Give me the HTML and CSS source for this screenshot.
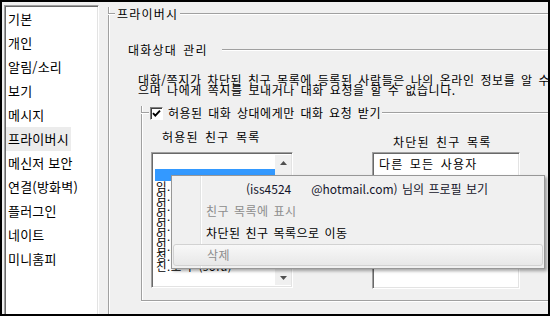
FILE: index.html
```html
<!DOCTYPE html>
<html lang="ko">
<head>
  <meta charset="UTF-8">
  <meta name="viewport" content="width=device-width, initial-scale=1.0">
  <title>환경설정 - 프라이버시</title>
  <link rel="stylesheet" href="styles.css">
</head>
<body>
  <div class="dialog">
    <ul class="nav">
      <li>기본</li>
      <li>개인</li>
      <li>알림/소리</li>
      <li>보기</li>
      <li>메시지</li>
      <li><span class="selected">프라이버시</span></li>
      <li>메신저 보안</li>
      <li>연결(방화벽)</li>
      <li>플러그인</li>
      <li>네이트</li>
      <li>미니홈피</li>
    </ul>

    <div class="page">
      <div class="group outer">
        <div class="group-head"><span class="title">프라이버시</span></div>
        <div class="section-head"><span class="title">대화상대 관리</span></div>
        <p class="desc">대화/쪽지가 차단된 친구 목록에 등록된 사람들은 나의 온라인 정보를 알 수 없<br>으며 나에게 쪽지를 보내거나 대화 요청을 할 수 없습니다.</p>

        <div class="group inner">
          <div class="group-head check-head">
            <span class="check">
              <svg width="11" height="11" viewBox="0 0 11 11"><path d="M2 5.2 L4.3 7.6 L9 2.6" fill="none" stroke="#000" stroke-width="1.9"/></svg>
            </span>
            <span class="title">허용된 대화 상대에게만 대화 요청 받기</span>
          </div>

          <div class="lists">
            <div class="col allowed">
              <div class="col-title">허용된 친구 목록</div>
              <div class="listbox">
                <div class="rows">
                  <div class="row"></div>
                  <div class="row active"></div>
                  <div class="row small">임.지훈 (jihoon)</div>
                  <div class="row small">임.수진 (sujin)</div>
                  <div class="row small">임.민호 (minho)</div>
                  <div class="row small">임.영희 (young)</div>
                  <div class="row small">임.현우 (hyun)</div>
                  <div class="row small">임.서연 (seo)</div>
                  <div class="row small">임.도윤 (doyun)</div>
                  <div class="row small">정.하늘 (sky)</div>
                  <div class="row small">진.소라 (sora)</div>
                </div>
                <div class="scroll">
                  <svg width="7" height="4" viewBox="0 0 7 4"><path d="M0 4 L3.5 0 L7 4Z" fill="#505050"/></svg>
                  <svg width="7" height="4" viewBox="0 0 7 4"><path d="M0 0 L3.5 4 L7 0Z" fill="#505050"/></svg>
                </div>
              </div>
            </div>

            <div class="col blocked">
              <div class="col-title">차단된 친구 목록</div>
              <div class="listbox">
                <div class="rows">
                  <div class="row plain">다른 모든 사용자</div>
                </div>
              </div>
            </div>
          </div>
        </div>
      </div>
    </div>

    <div class="menu">
      <div class="item profile">(iss4524<span class="blank"></span>@hotmail.com) 님의 프로필 보기</div>
      <div class="item disabled">친구 목록에 표시</div>
      <div class="item">차단된 친구 목록으로 이동</div>
      <div class="item disabled hover">삭제</div>
    </div>
  </div>
</body>
</html>
```

FILE: styles.css
```css
html,
body {
  margin: 0;
  padding: 0;
}

body {
  font-family: "Noto Sans CJK KR", "Noto Sans", sans-serif;
  color: #000;
}

.dialog {
  width: 550px;
  height: 316px;
  box-sizing: border-box;
  border: 2px solid #000;
  background-color: #f0f0f0;
  display: flex;
  align-items: flex-start;
  overflow: hidden;
  position: relative;
}

/* left category list */
.nav {
  list-style: none;
  margin: 3px 0 0 2px;
  padding: 1px 0 0 0;
  width: 95px;
  height: 330px;
  flex-shrink: 0;
  box-sizing: border-box;
  background-color: #fff;
  border: 1px solid;
  border-color: #a0a0a0 #fff #fff #a0a0a0;
  box-shadow: inset 1px 1px 0 #696969, inset -1px -1px 0 #e3e3e3;
  font-size: 13px;
  letter-spacing: 0.2px;
}

.nav li {
  height: 24px;
  line-height: 24px;
  padding-left: 3px;
  white-space: nowrap;
}

.nav .selected {
  display: inline-block;
  margin-left: -2px;
  padding: 0 2px;
  background-color: #ececec;
}

/* right page */
.page {
  flex: 1;
  min-width: 0;
  padding-left: 9px;
  font-size: 12px;
  letter-spacing: 1.2px;
  word-spacing: 1.8px;
}

.group {
  border-left: 1px solid #a0a0a0;
  box-shadow: inset 1px 0 0 #fff;
}

.outer {
  margin-top: 12px;
  height: 400px;
}

.group-head,
.section-head {
  display: flex;
  align-items: center;
  height: 14px;
  line-height: 14px;
  white-space: nowrap;
}

.group-head {
  margin: -7px 0 0 -1px;
}

.group-head::before {
  content: "";
  width: 7px;
  border-top: 1px solid #a0a0a0;
  border-bottom: 1px solid #fff;
}

.group-head::after,
.section-head::after {
  content: "";
  flex: 1;
  border-top: 1px solid #a0a0a0;
  border-bottom: 1px solid #fff;
}

.group-head .title {
  padding: 0 2px;
}

.section-head {
  margin: 22px 0 0 19px;
}

.section-head .title {
  padding-right: 14px;
}

.desc {
  margin: 18px 0 0 29px;
  line-height: 10px;
  white-space: nowrap;
  letter-spacing: 0.6px;
}

.inner {
  margin: 18px 0 0 32px;
  height: 195px;
  box-sizing: border-box;
  border-bottom: 1px solid #a0a0a0;
  box-shadow: inset 1px 0 0 #fff, 0 1px 0 #fff;
}

.check-head::before {
  width: 8px;
}

.check-head .title {
  padding: 0 1px 0 5px;
  letter-spacing: 0.5px;
}

.check {
  width: 11px;
  height: 11px;
  margin-left: 1px;
  background-color: #fff;
  border: 1px solid;
  border-color: #808080 #fff #fff #808080;
  box-shadow: inset 1px 1px 0 #404040;
  display: flex;
}

/* friend lists */
.lists {
  display: flex;
  align-items: flex-start;
  gap: 79px;
  padding-left: 9px;
}

.col-title {
  height: 14px;
  line-height: 14px;
  white-space: nowrap;
}

.allowed .col-title {
  margin-top: 10px;
  padding-left: 11px;
}

.blocked .col-title {
  margin-top: 15px;
  padding-left: 21px;
}

.listbox {
  display: flex;
  box-sizing: border-box;
  background-color: #fff;
  border: 1px solid;
  border-color: #a0a0a0 #fff #fff #a0a0a0;
  box-shadow: inset 1px 1px 0 #696969, inset -1px -1px 0 #e3e3e3;
  overflow: hidden;
}

.allowed .listbox {
  width: 142px;
  height: 136px;
  margin-top: 8px;
  padding: 2px 1px 2px 2px;
}

.blocked .listbox {
  width: 148px;
  height: 137px;
  margin-top: 3px;
  padding: 2px;
}

.rows {
  flex: 1;
  min-width: 0;
  overflow: hidden;
}

.allowed .rows {
  padding-top: 2px;
}

.row {
  height: 12px;
  white-space: nowrap;
}

.row.active {
  margin-left: 1px;
  background-color: #3399ff;
}

.row.small {
  height: 10px;
  line-height: 10px;
  padding-left: 2px;
  font-size: 11.5px;
  letter-spacing: 0.5px;
}

.row.plain {
  height: 13px;
  line-height: 13px;
  padding: 2px 0 0 4px;
}

.scroll {
  width: 16px;
  flex-shrink: 0;
  background-color: #f0f0f0;
  display: flex;
  flex-direction: column;
  align-items: center;
  justify-content: space-between;
  padding: 6px 0 5px;
  box-sizing: border-box;
}

/* context menu over the list */
.menu {
  position: absolute;
  left: 169px;
  top: 173px;
  width: 374px;
  height: 94px;
  box-sizing: border-box;
  padding: 2px 1px 1px 0;
  border: 1px solid #979797;
  background-color: #f0f0f0;
  background-image: linear-gradient(to right, transparent 28px, #e2e3e3 28px, #e2e3e3 29px, #fff 29px, #fff 30px, transparent 30px);
  box-shadow: 2px 2px 3px rgba(0, 0, 0, 0.35);
  font-size: 12px;
  letter-spacing: 0.5px;
  word-spacing: 1px;
}

.item {
  height: 22px;
  line-height: 22px;
  padding-left: 34px;
  white-space: nowrap;
  box-sizing: border-box;
}

.item.profile {
  padding-left: 74px;
  letter-spacing: 0;
  color: #14142a;
}

.blank {
  display: inline-block;
  width: 20px;
}

.item.disabled {
  color: #8d8d8d;
}

.item.hover {
  margin-left: 1px;
  padding-left: 33px;
  line-height: 20px;
  border: 1px solid #d2d2d2;
  border-radius: 3px;
  background: linear-gradient(#f8f8f8, #e8e8e8);
}
```
